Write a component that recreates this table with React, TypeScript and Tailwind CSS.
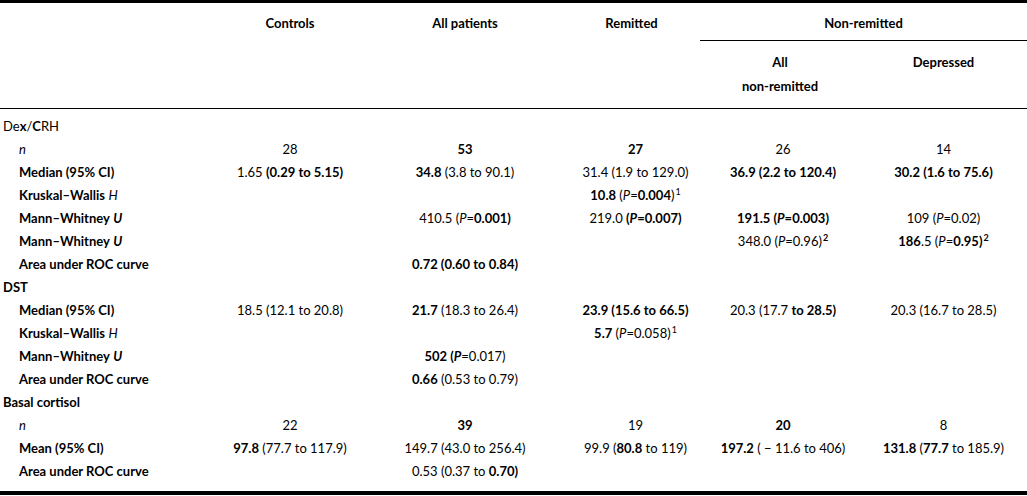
import React from "react";

const B = ({ children }: { children: React.ReactNode }) => <span className="font-bold">{children}</span>;
const I = ({ children }: { children: React.ReactNode }) => <span className="italic">{children}</span>;
const BI = ({ children }: { children: React.ReactNode }) => <span className="font-bold italic">{children}</span>;
const Sup = ({ children }: { children: React.ReactNode }) => (
  <sup className="text-[9px] -top-[5px] ml-[1px]">{children}</sup>
);

type Row = { label: React.ReactNode; sub?: boolean; cells?: React.ReactNode[] };

const rows: Row[] = [
  { label: <>De<B>x</B>/<B>C</B>RH</> },
  { label: <I>n</I>, sub: true, cells: ["28", <B>53</B>, <B>27</B>, "26", "14"] },
  {
    label: <B>Median (95% CI)</B>,
    sub: true,
    cells: [
      <>1.65 <B>(0.29 to 5.15)</B></>,
      <><B>34.8</B> (3.8 to 90.1)</>,
      <>31.4 (1.9 to 129.0)</>,
      <B>36.9 (2.2 to 120.4)</B>,
      <B>30.2 (1.6 to 75.6)</B>,
    ],
  },
  {
    label: <><B>Kruskal–Wallis</B> <I>H</I></>,
    sub: true,
    cells: ["", "", <><B>10.8</B> (<I>P</I>=<B>0.004</B>)<Sup>1</Sup></>, "", ""],
  },
  {
    label: <><B>Mann–Whitney</B> <BI>U</BI></>,
    sub: true,
    cells: [
      "",
      <>410.5 (<I>P</I>=<B>0.001)</B></>,
      <>219.0 <B>(<I>P</I>=0.007)</B></>,
      <B>191.5 (<I>P</I>=0.003)</B>,
      <>109 (<I>P</I>=0.02)</>,
    ],
  },
  {
    label: <><B>Mann–Whitney</B> <BI>U</BI></>,
    sub: true,
    cells: [
      "",
      "",
      "",
      <>348.0 (<I>P</I>=0.96)<Sup><B>2</B></Sup></>,
      <><B>186</B>.5 (<I>P</I>=<B>0.95)</B><Sup><B>2</B></Sup></>,
    ],
  },
  {
    label: <B>Area under ROC curve</B>,
    sub: true,
    cells: ["", <B>0.72 (0.60 to 0.84)</B>, "", "", ""],
  },
  { label: <B>DST</B> },
  {
    label: <B>Median (95% CI)</B>,
    sub: true,
    cells: [
      <>18.5 (12.1 to 20.8)</>,
      <><B>21.7</B> (18.3 to 26.4)</>,
      <B>23.9 (15.6 to 66.5)</B>,
      <>20.3 (17.7 <B>to 28.5)</B></>,
      <>20.3 (16.7 to 28.5)</>,
    ],
  },
  {
    label: <><B>Kruskal–Wallis</B> <I>H</I></>,
    sub: true,
    cells: ["", "", <><B>5.7</B> (<I>P</I>=0.058)<Sup>1</Sup></>, "", ""],
  },
  {
    label: <><B>Mann–Whitney</B> <BI>U</BI></>,
    sub: true,
    cells: ["", <><B>502 (<I>P</I></B>=0.017)</>, "", "", ""],
  },
  {
    label: <B>Area under ROC curve</B>,
    sub: true,
    cells: ["", <><B>0.66</B> (0.53 to 0.79)</>, "", "", ""],
  },
  { label: <B>Basal cortisol</B> },
  { label: <I>n</I>, sub: true, cells: ["22", <B>39</B>, "19", <B>20</B>, "8"] },
  {
    label: <B>Mean (95% CI)</B>,
    sub: true,
    cells: [
      <><B>97.8</B> (77.7 to 117.9)</>,
      <>149.7 (43.0 to 256.4)</>,
      <>99.9 (<B>80.8</B> to 119)</>,
      <><B>197.2</B> ( − 11.6 to 406)</>,
      <><B>131.8</B> (<B>77.7</B> to 185.9)</>,
    ],
  },
  {
    label: <B>Area under ROC curve</B>,
    sub: true,
    cells: ["", <>0.53 (0.37 to <B>0.70)</B></>, "", "", ""],
  },
];

const cols = "grid grid-cols-[205px_170px_180px_145px_160px_167px]";
const cellPad = ["", "", "pl-[16px]", "pl-[6px]", ""];

export default function App() {
  return (
    <div className="w-[1027px] h-[496px] bg-white text-black font-['Lato',_'Noto_Sans',_sans-serif] text-[13px] leading-[23px]">
      <div className="border-t-[3px] border-black">
        {/* header row 1 */}
        <div className={`${cols} h-[37px] pt-[3px] items-center font-bold`}>
          <div />
          <div className="text-center">Controls</div>
          <div className="text-center">All patients</div>
          <div className="text-center pl-[8px]">Remitted</div>
          <div className="col-span-2 text-center">Non-remitted</div>
        </div>
        <div className={cols}>
          <div className="col-span-4" />
          <div className="col-span-2 border-t border-black" />
        </div>
        {/* header row 2 */}
        <div className={`${cols} h-[68px] pt-[9px] font-bold leading-[24px] border-b border-black`}>
          <div className="col-span-4" />
          <div className="text-center">
            All
            <br />
            non-remitted
          </div>
          <div className="text-center">Depressed</div>
        </div>
        {/* body */}
        <div className="pt-[6px] pb-[8px] border-b-4 border-black">
          {rows.map((r, i) => (
            <div key={i} className={`${cols} h-[23px] items-center`}>
              <div className={r.sub ? "pl-[19px] whitespace-nowrap" : "pl-[3px] whitespace-nowrap"}>{r.label}</div>
              {(r.cells ?? ["", "", "", "", ""]).map((c, j) => (
                <div key={j} className={`text-center whitespace-nowrap ${cellPad[j]}`}>
                  {c}
                </div>
              ))}
            </div>
          ))}
        </div>
      </div>
    </div>
  );
}
